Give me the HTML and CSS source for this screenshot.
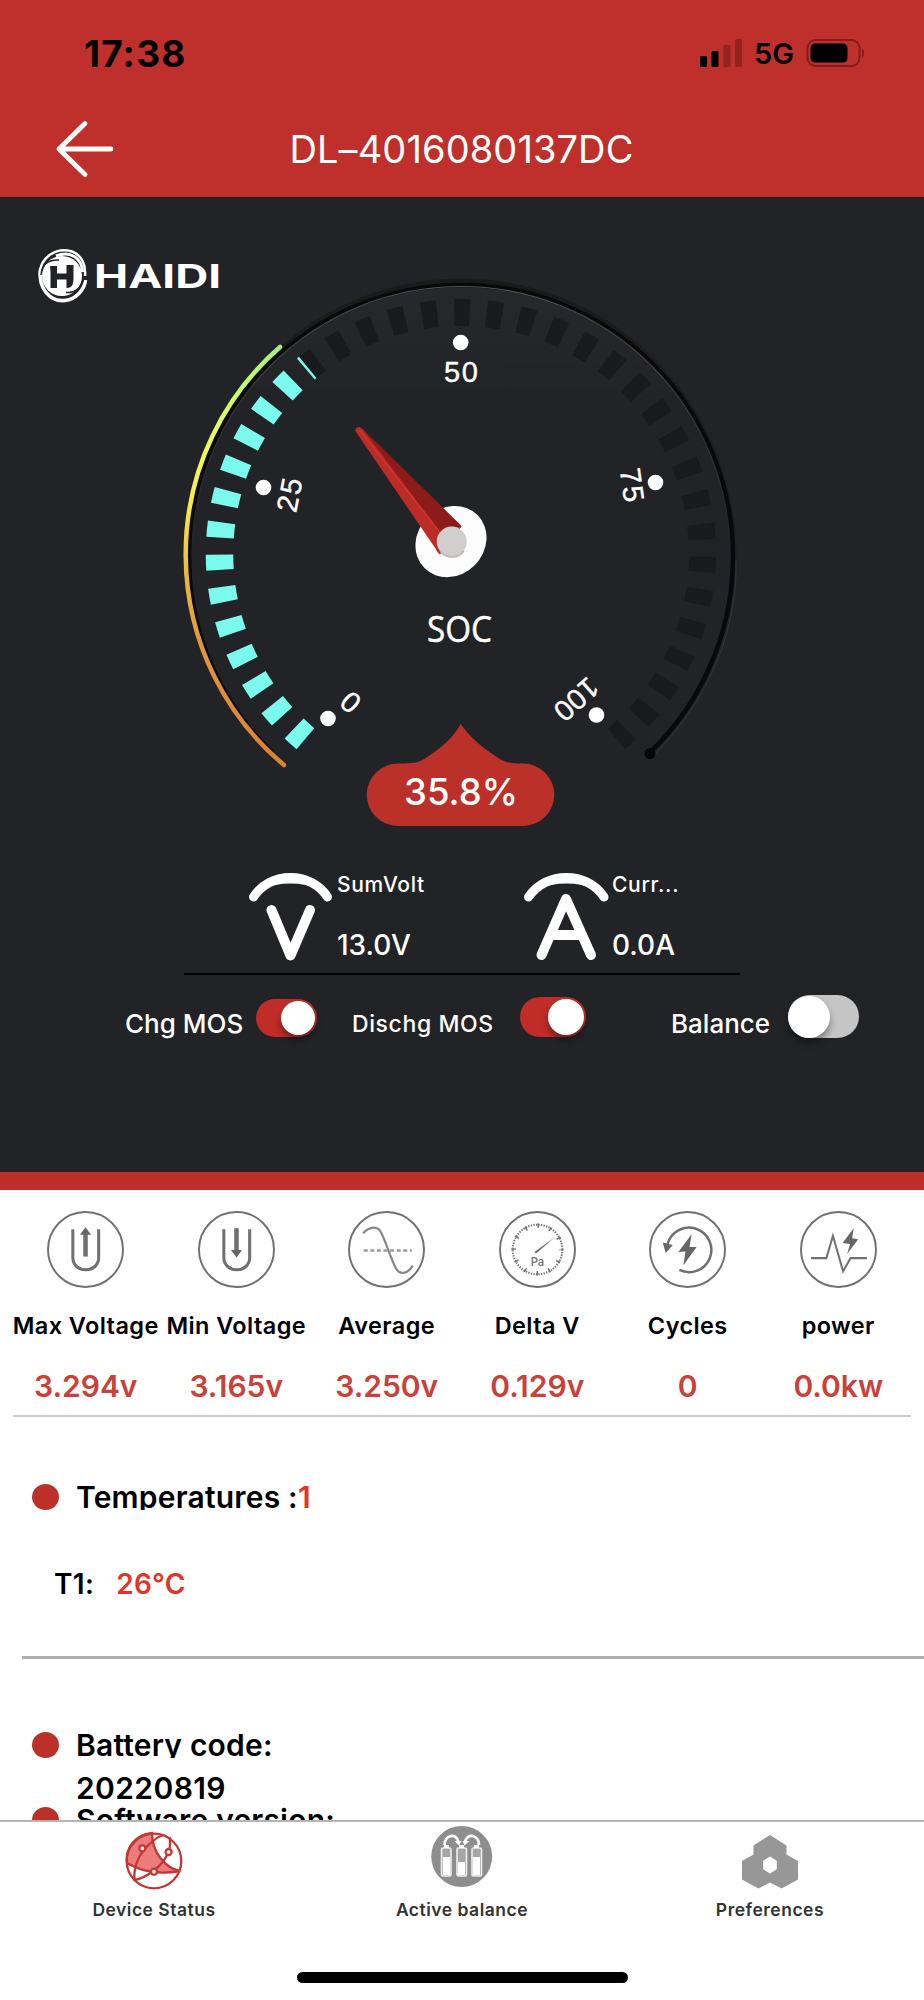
FILE: index.html
```html
<!DOCTYPE html>
<html lang="en">
<head>
<meta charset="utf-8">
<title>Device Status</title>
<link rel="stylesheet" href="styles.css">
</head>
<body>
<div class="app">
  <header class="header">
    <div class="status">
      <span class="time">17:38</span>
      <div class="status-right">
        <svg class="signal" width="43" height="28" viewBox="0 0 43 28">
          <rect x="0" y="17" width="7" height="11" rx="1.5"/><rect x="11.500" y="12" width="7" height="16" rx="1.500"/>
          <g fill="#8f2421"><rect x="23.500" y="6" width="7" height="22" rx="1.500"/><rect x="35" y="0" width="7" height="28" rx="1.500"/></g>
        </svg>
        <span class="net">5G</span>
        <svg width="60" height="30" viewBox="0 0 60 30">
          <rect x="1.500" y="2" width="52" height="26" rx="8" fill="none" stroke="#7d1f1d" stroke-width="2"/>
          <rect x="4.500" y="5.500" width="37" height="19" rx="4.500"/>
          <path d="M56 10.500c2.800 1.200 2.800 7.800 0 9z" fill="#7d1f1d"/>
        </svg>
      </div>
    </div>
    <div class="nav">
      <svg class="back" width="60" height="60" viewBox="0 0 60 60"><path d="M57 30H5M31 4.500 5 30l26 25.500" fill="none" stroke="#fff" stroke-width="4.800" stroke-linecap="round" stroke-linejoin="round"/></svg>
      <h1 class="title">DL–4016080137DC</h1>
    </div>
  </header>

  <section class="hero">
    <svg class="gauge" width="924" height="645" viewBox="0 197 924 645">
      <defs>
        <linearGradient id="arc" gradientUnits="userSpaceOnUse" x1="0" y1="766" x2="0" y2="345">
          <stop offset="0" stop-color="#d98234"/><stop offset=".3" stop-color="#e0983a"/><stop offset=".5" stop-color="#efc540"/>
          <stop offset=".62" stop-color="#f7ea4b"/><stop offset=".75" stop-color="#f2fb57"/><stop offset=".88" stop-color="#cdf96a"/><stop offset="1" stop-color="#a0f083"/>
        </linearGradient>
        <linearGradient id="ring" gradientUnits="userSpaceOnUse" x1="0" y1="285" x2="0" y2="560">
          <stop offset="0" stop-color="#505154"/><stop offset="1" stop-color="#505154" stop-opacity="0"/>
        </linearGradient>
        <linearGradient id="shade" gradientUnits="userSpaceOnUse" x1="0" y1="285" x2="0" y2="650">
          <stop offset="0" stop-color="#1a1a1b"/><stop offset="1" stop-color="#1a1a1b" stop-opacity="0"/>
        </linearGradient>
        <linearGradient id="face" gradientUnits="userSpaceOnUse" x1="0" y1="285" x2="0" y2="400">
          <stop offset="0" stop-color="#27282c"/><stop offset="1" stop-color="#222327"/>
        </linearGradient>
      </defs>

      <g class="brand">
        <circle cx="62" cy="276" r="20" fill="#fff"/>
        <g fill="none" stroke="#fff">
          <path d="M39.500 275C40 257 56 247 72 251.500 82 255.500 86 265 85 276" stroke-width="2.500"/>
          <path d="M40.500 270C38 288 50 302 65 300.500 76 299 84.500 290 85.500 280" stroke-width="3.500"/>
          <path d="M56 256C70 250 82 258 82.500 272" stroke-width="3"/>
        </g>
        <path d="M41 275C42 264 49 259.500 59 260M84 277C82 288 76 293 66 292.500" fill="none" stroke="#222327" stroke-width="1.500"/>
        <path d="M50 266h7v7.500h9.500V265h7v11c0 8-.5 12-7 12V279.500H57V288h-6.500v-16z" fill="#222327"/>
        <text x="94" y="287.500" font-size="33" font-weight="700" textLength="127" lengthAdjust="spacingAndGlyphs">HAIDI</text>
      </g>

      <circle cx="461" cy="557" r="270" fill="url(#face)"/>
      <g fill="none" stroke-linecap="round">
        <path d="M188 557A273 275.500 0 0 1 734 557A273 275.500 0 0 1 651 752" stroke="url(#shade)" stroke-width="6"/>
        <path d="M271.500 752A272 272 0 1 1 650.500 752" stroke="#09090a" stroke-width="4.500"/>
        <path d="M191.500 557A269.500 270.500 0 0 1 730.500 557" stroke="url(#ring)" stroke-width="1.200"/>
        <path d="M652 757.500q3-1 3.500-4C710 698 738 628 736 560" stroke="#3a3b3e" stroke-width=".8"/>
        <circle cx="650" cy="753.500" r="5.500" fill="#060607"/>
        <path d="M305.400 738.700A241.500 241.500 0 1 1 616.600 738.700" stroke="#191a1b" stroke-width="27" stroke-dasharray="15.300 17.070" stroke-linecap="butt"/>
        <path d="M305.400 738.700A241.500 241.500 0 0 1 307.700 367.400" stroke="#7bf9ec" stroke-width="27.500" stroke-dasharray="15.300 17.070" stroke-linecap="butt"/>
        <path d="M284 765A275 275 0 0 1 280 347" stroke="url(#arc)" stroke-width="4.500"/>
      </g>

      <g fill="#fff">
        <circle cx="328" cy="718.500" r="7.800"/><circle cx="263.500" cy="487.500" r="7.800"/><circle cx="460.700" cy="342.500" r="7.800"/>
        <circle cx="655.500" cy="482.500" r="7.800"/><circle cx="596.500" cy="715" r="7.800"/>
      </g>
      <g class="scale" text-anchor="middle">
        <text transform="translate(351 702) rotate(-139)" y="9.500">0</text>
        <text transform="translate(289.500 495) rotate(-79)" y="10" textLength="34">25</text>
        <text x="461" y="381.500" textLength="34">50</text>
        <text transform="translate(632 485) rotate(82)" y="10" textLength="34">75</text>
        <text transform="translate(576 699) rotate(138)" y="9.500" textLength="49">100</text>
      </g>

      <ellipse cx="451" cy="541.600" rx="37.500" ry="33.500" transform="rotate(-45 451 541.600)" fill="#fcfcfc"/>
      <path d="M357 427.500q3-1.500 5.500 1.500L461.500 526.500 440 554.500q-2-1-4.500-6L356 432q-1.500-2.500 1-4.500z" fill="#bd2b26"/>
      <path d="M362 428.500 461.500 526 450 529 441 533z" fill="#8d1b19"/>
      <path d="m359.500 430 81 103" stroke="#cf3a33" stroke-width="1.200"/>
      <circle cx="451.700" cy="541.500" r="15" fill="#d1cfce"/>
      <path d="M440 551a15 15 0 0 0 24 0" fill="none" stroke="#b9b6b5" stroke-width="1.500"/>
      <text class="soc" x="459.500" y="642" text-anchor="middle" textLength="65" lengthAdjust="spacingAndGlyphs">SOC</text>

      <path d="M460.700 724C474 743 490 752 499 758.500 507 763.500 514 763.500 523 763.500A31 31 0 0 1 523 826H398A31 31 0 0 1 398 763.500C412 763.500 418 763 425 758.500 438 750 452 740 460.700 724Z" fill="#bb3129"/>
      <text class="percent" x="461" y="804.500" text-anchor="middle" textLength="114" lengthAdjust="spacingAndGlyphs">35.8%</text>
    </svg>

    <div class="readouts">
      <div class="readout">
        <svg width="88" height="92" viewBox="247 870 88 92" fill="none" stroke="#fff" stroke-linecap="round" stroke-linejoin="round">
          <path d="M253.500 897C270 871 311 871 327.500 897" stroke-width="9"/>
          <path d="M262 888C277 874 304 874 319 888 303 880 278 880 262 888Z" fill="#fff" stroke-width="3"/>
          <path d="m271.500 910 19 45.500L310 910" stroke-width="10"/>
        </svg>
        <div class="pair"><span class="label">SumVolt</span><span class="value">13.0V</span></div>
      </div>
      <div class="readout">
        <svg width="88" height="92" viewBox="522 870 88 92" fill="none" stroke="#fff" stroke-linecap="round" stroke-linejoin="round">
          <path d="M528.500 897C546 871 587 871 604 897" stroke-width="9"/>
          <path d="M538 888C553 874 580 874 595 888 579 880 554 880 538 888Z" fill="#fff" stroke-width="3"/>
          <path d="m541.500 955 24.500-56 25 56M551 935h31" stroke-width="10"/>
        </svg>
        <div class="pair"><span class="label">Curr...</span><span class="value">0.0A</span></div>
      </div>
    </div>

    <div class="switches">
      <span class="sw-label chg">Chg MOS</span>
      <i class="toggle on t1"></i>
      <span class="sw-label dis">Dischg MOS</span>
      <i class="toggle on t2"></i>
      <span class="sw-label bal">Balance</span>
      <i class="toggle t3"></i>
    </div>
  </section>

  <section class="metrics">
    <div class="metric">
      <svg class="mi" viewBox="0 0 76 76"><circle cx="38" cy="38" r="37"/><path d="M25.500 18v28c0 16 25.500 16 25.500 0V18" stroke-width="3"/><path d="M38 45V22" stroke-width="4.500"/><path d="m38 16 5.500 7.500h-11z" class="f"/></svg>
      <span class="m-label">Max Voltage</span><b class="m-value">3.294v</b>
    </div>
    <div class="metric">
      <svg class="mi" viewBox="0 0 76 76"><circle cx="38" cy="38" r="37"/><path d="M25.500 18v28c0 16 25.500 16 25.500 0V18" stroke-width="3"/><path d="M38 17v23" stroke-width="4.500"/><path d="m38 46 5.500-7.500h-11z" class="f"/></svg>
      <span class="m-label">Min Voltage</span><b class="m-value">3.165v</b>
    </div>
    <div class="metric">
      <svg class="mi" viewBox="0 0 76 76"><circle cx="38" cy="38" r="37"/><path d="M15 22C21 15 30 14 33 22 38 32 41 44 47 56 51 64 59 62 64 54" stroke="#87888a" stroke-width="2.200"/><path d="M15.500 39H63" stroke="#9b9b9b" stroke-width="2.400" stroke-dasharray="4 2.500"/></svg>
      <span class="m-label">Average</span><b class="m-value">3.250v</b>
    </div>
    <div class="metric">
      <svg class="mi" viewBox="0 0 76 76"><circle cx="38" cy="38" r="37"/><circle cx="38" cy="38" r="24.500" stroke-width="2" stroke-dasharray="1.300 1.270"/><circle cx="38" cy="38" r="23.500" stroke-width="4.500" stroke-dasharray="1.500 10.804" stroke-dashoffset=".75"/><path d="M35 40.500 36.500 42 55 26z" class="f"/><text x="38" y="54" text-anchor="middle" class="pa">Pa</text></svg>
      <span class="m-label">Delta V</span><b class="m-value">0.129v</b>
    </div>
    <div class="metric">
      <svg class="mi" viewBox="0 0 76 76"><circle cx="38" cy="38" r="37"/><path d="M18.200 33A22 22 0 1 1 30 58.200" stroke-width="2.500"/><path d="m13.500 31 10 2.500-7 8z" class="f"/><path d="M42 23 29 40.500l7-.5-2 13.500L47 35.500h-7z" class="f"/></svg>
      <span class="m-label">Cycles</span><b class="m-value">0</b>
    </div>
    <div class="metric">
      <svg class="mi" viewBox="0 0 76 76"><circle cx="38" cy="38" r="37"/><path d="M11 46.500h15l6.500-22 10 35 7.500-13h16" stroke-width="2"/><path d="M53 17 42 31.500l7.500 1-3 10 11-14.500-6-1z" class="f"/></svg>
      <span class="m-label">power</span><b class="m-value">0.0kw</b>
    </div>
  </section>

  <section class="details">
    <div class="row"><i class="dot"></i><span class="row-text">Temperatures :<em>1</em></span></div>
    <div class="temps"><span>T1:</span><em>26°C</em></div>
    <hr class="rule">
    <div class="row"><i class="dot"></i><span class="row-text">Battery code:</span></div>
    <div class="code">20220819</div>
    <div class="row"><i class="dot"></i><span class="row-text">Software version:</span></div>
  </section>

  <footer class="tabs">
    <div class="tab">
      <svg width="66" height="64" viewBox="121 1828 66 64" fill="none" stroke="#c53734" stroke-width="2.300">
        <path d="M152 1833C134 1835 125 1849 127 1863 140 1871 158 1875 180 1871 165 1868 152 1852 152 1833Z" fill="#ec7b7b"/>
        <circle cx="154" cy="1861" r="27.300"/>
        <path d="M152 1842C156 1838 160 1836 163 1835M152 1842C141 1850 133 1865 134.500 1880 146 1878 162 1867 168 1853 171 1847 170 1840 169.500 1837"/>
        <g fill="#fff"><circle cx="142.300" cy="1848.300" r="3"/><circle cx="168.600" cy="1852" r="3"/><circle cx="154" cy="1871.700" r="3"/></g>
      </svg>
      <span>Device Status</span>
    </div>
    <div class="tab">
      <svg class="cells" width="66" height="64" viewBox="429 1828 66 64">
        <circle cx="461.700" cy="1856.500" r="30.500" fill="#8e8e8e"/>
        <g fill="none" stroke="#fff"><path d="M444.500 1845c0-10 12-13 14-3M479 1845c0-10-12-13-14-3" stroke-width="2.800"/>
          <g fill="#a6a6a6" stroke="#eee" stroke-width="1.600"><rect x="441.500" y="1848" width="9.500" height="28" rx="1.500"/><rect x="457" y="1848" width="9.500" height="28" rx="1.500"/><rect x="472" y="1848" width="9.500" height="28" rx="1.500"/></g></g>
        <path d="M443 1857h7v18h-7zM458 1862h7v13h-7zM473 1857h7v18h-7zM444 1845h5v3h-5zM459 1845h5v3h-5zM474 1845h5v3h-5zM454.500 1841h7l-2.500 4.500zM462.500 1841h7l-5 4.500z" fill="#fff"/>
      </svg>
      <span>Active balance</span>
    </div>
    <div class="tab">
      <svg width="66" height="64" viewBox="737 1828 66 64"><path fill-rule="evenodd" d="m770 1835 16.500 10.500v9L798 1861v18.500l-16.500 9-11.500-6-11.500 6-16.500-9V1861l11.500-6.500v-9zm0 21.500-6.800 4.200v8.600l6.800 4.200 6.800-4.200v-8.600z" fill="#979797"/></svg>
      <span>Preferences</span>
    </div>
  </footer>
  <div class="home"></div>
</div>
</body>
</html>
```
FILE: styles.css
```css
* { box-sizing: border-box; }
body { margin: 0; font-family: Inter, "Liberation Sans", sans-serif; background: #fff; }
.app { width: 924px; height: 2000px; overflow: hidden; display: flex; flex-direction: column; background: #fff; }
em { font-style: normal; color: #e0352b; }
svg { display: block; flex: none; }

.header { height: 197px; background: #bf2f2b; flex: none; }
.status { height: 106px; padding: 0 58px 0 84px; display: flex; justify-content: space-between; align-items: center; }
.time { font-size: 37px; font-weight: 700; letter-spacing: 1.200px; }
.status-right { display: flex; align-items: center; }
.net { font-size: 29px; font-weight: 600; margin: 0 11px 0 11px; width: 41px; }
.nav { height: 86px; display: flex; align-items: center; padding-left: 54px; }
.title { margin: 0; width: 695px; text-align: center; font-size: 38px; font-weight: 430; color: #fff; letter-spacing: .1px; }

.hero { height: 993px; flex: none; background: #222327; border-bottom: 18px solid #bd2e29; color: #fff; }
.brand text { font-family: Inter, sans-serif; fill: #fff; }
.scale text { font-family: "Liberation Sans", sans-serif; font-size: 29px; fill: #fff; stroke: #fff; stroke-width: .4px; }
.soc { font-family: "Open Sans", sans-serif; font-size: 37px; fill: #fff; stroke: #fff; stroke-width: .5px; }
.percent { font-size: 37px; font-weight: 550; fill: #fff; }
.readouts { display: flex; margin: 28px 184px 0; height: 105px; padding-left: 63px; border-bottom: 2.500px solid #000; }
.readout { display: flex; flex: none; width: 275px; }
.pair { display: flex; flex-direction: column; padding-left: 2px; }
.label { font-size: 21px; font-weight: 540; line-height: 26px; padding-top: 2px; height: 47px; letter-spacing: .7px; }
.value { font-size: 28px; font-weight: 540; line-height: 34px; padding-top: 11px; }
.switches { display: flex; align-items: flex-start; padding: 20px 0 0 125px; }
.sw-label { flex: none; font-weight: 530; line-height: 32px; padding-top: 13px; white-space: nowrap; }
.chg { font-size: 26px; width: 131px; }
.dis { font-size: 23px; width: 168px; letter-spacing: .6px; }
.bal { font-size: 26px; width: 117px; }
.toggle { border-radius: 22px; flex: none; background: #c5c5c5; display: flex; align-items: center; }
.toggle::after { content: ""; border-radius: 50%; background: #fff; width: 34px; height: 34px; box-shadow: 0 5px 7px rgba(0,0,0,.38); }
.on { background: #c02d28; justify-content: flex-end; padding-right: 2px; }
.t1 { width: 61px; height: 38px; margin: 4px 35px 0 0; }
.t2 { width: 66px; height: 40px; margin: 2px 85px 0 0; }
.t2::after { width: 36px; height: 36px; }
.t3 { width: 71px; height: 43px; }
.t3::after { width: 42px; height: 42px; }

.metrics { display: grid; grid-template-columns: repeat(6, 150.500px); margin: 0 13px; height: 227px; flex: none; padding-top: 21px; border-bottom: 2px solid #cbcbcb; justify-content: center; }
.metric { display: flex; flex-direction: column; align-items: center; }
.mi { width: 77px; height: 77px; fill: none; stroke: #6f7072; stroke-width: 1.900; }
.mi .f { fill: #666; stroke: none; }
.mi .pa { font-size: 11px; font-weight: 600; fill: #777; stroke: none; }
.m-label { font-size: 23.500px; font-weight: 560; line-height: 30px; margin-top: 23px; white-space: nowrap; letter-spacing: .4px; }
.m-value { font-size: 30px; font-weight: 600; line-height: 36px; margin-top: 27px; color: #c9413b; }

.details { height: 403px; flex: none; overflow: hidden; padding-top: 67px; font-size: 30px; font-weight: 570; }
.row { display: flex; height: 26px; padding-left: 32px; gap: 17px; }
.dot { width: 27px; height: 26px; border-radius: 50%; background: #bb3129; flex: none; }
.row-text { line-height: 27px; height: 26px; overflow: hidden; white-space: nowrap; letter-spacing: .2px; }
.temps { display: flex; gap: 22px; padding: 57px 0 0 54px; font-size: 28px; line-height: 34px; letter-spacing: .3px; }
.rule { margin: 55px 0 73px 22px; border: 0; height: 2.500px; background: #afafaf; }
.code { padding-left: 76px; line-height: 36px; margin: 12px 0 1px; letter-spacing: .4px; }

.tabs { display: flex; height: 110px; flex: none; border-top: 2px solid #b4b4b4; }
.tab { width: 33.333%; display: flex; flex-direction: column; align-items: center; padding-top: 6px; font-size: 17.500px; font-weight: 570; color: #333; letter-spacing: .5px; }
.tab span { line-height: 22px; margin-top: 7px; }
.cells { overflow: visible; }
.home { width: 331px; height: 11px; border-radius: 6px; background: #000; margin: 42px auto 0; flex: none; }
```
